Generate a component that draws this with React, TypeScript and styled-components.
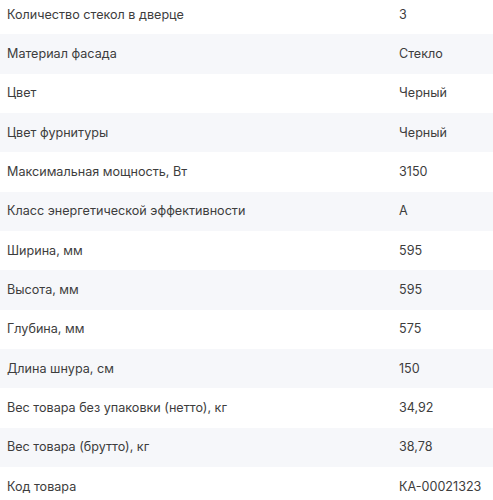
import { createGlobalStyle } from "styled-components";
import styled from "styled-components";

const GlobalStyle = createGlobalStyle`
  html, body {
    margin: 0;
    padding: 0;
    background: #ffffff;
  }
  body {
    font-family: Inter, "Noto Sans", "Liberation Sans", sans-serif;
    overflow: hidden;
  }
`;

const SpecsTable = styled.div`
  display: flex;
  flex-direction: column;
  width: 493px;
  margin-top: -5px;
`;

const SpecRow = styled.div<{ $shaded: boolean }>`
  display: grid;
  grid-template-columns: 392px 1fr;
  align-items: center;
  height: 39.33px;
  padding-left: 7px;
  background: ${({ $shaded }) => ($shaded ? "#f6f7fa" : "#ffffff")};
  color: #3d3d3d;
  font-size: 12.6px;
  line-height: 16px;
  letter-spacing: 0;
`;

const SpecName = styled.span`
  white-space: nowrap;
`;

const SpecValue = styled.span`
  white-space: nowrap;
`;

const specs: [string, string][] = [
  ["Количество стекол в дверце", "3"],
  ["Материал фасада", "Стекло"],
  ["Цвет", "Черный"],
  ["Цвет фурнитуры", "Черный"],
  ["Максимальная мощность, Вт", "3150"],
  ["Класс энергетической эффективности", "A"],
  ["Ширина, мм", "595"],
  ["Высота, мм", "595"],
  ["Глубина, мм", "575"],
  ["Длина шнура, см", "150"],
  ["Вес товара без упаковки (нетто), кг", "34,92"],
  ["Вес товара (брутто), кг", "38,78"],
  ["Код товара", "КА-00021323"],
];

export default function App() {
  return (
    <>
      <GlobalStyle />
      <SpecsTable>
        {specs.map(([name, value], i) => (
          <SpecRow key={name} $shaded={i % 2 === 1}>
            <SpecName>{name}</SpecName>
            <SpecValue>{value}</SpecValue>
          </SpecRow>
        ))}
      </SpecsTable>
    </>
  );
}
